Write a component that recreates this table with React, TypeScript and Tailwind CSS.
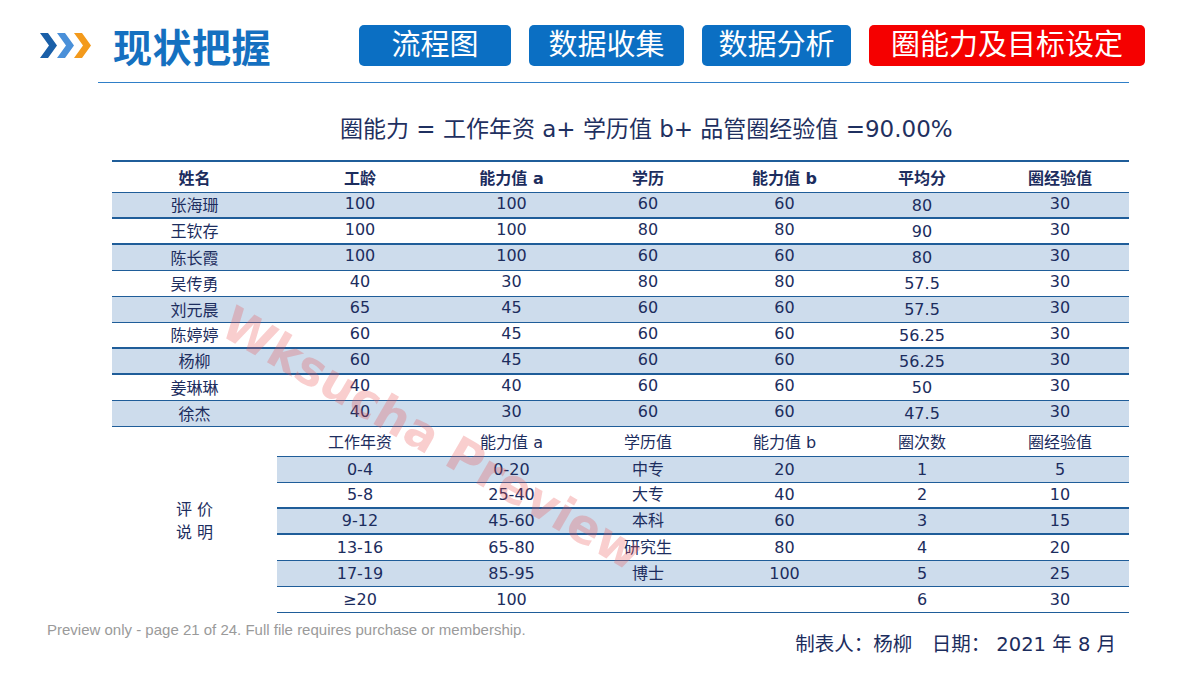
import React from "react";

const FONT = '"DejaVu Sans", "Noto Sans CJK SC", sans-serif';
const COLS = [165, 166, 137, 136, 137, 138, 138];

type Row = { cells: string[]; shade: boolean; bw: number };

const mainRows: Row[] = [
  { cells: ["张海珊", "100", "100", "60", "60", "80", "30"], shade: true, bw: 2 },
  { cells: ["王钦存", "100", "100", "80", "80", "90", "30"], shade: false, bw: 2 },
  { cells: ["陈长霞", "100", "100", "60", "60", "80", "30"], shade: true, bw: 1 },
  { cells: ["吴传勇", "40", "30", "80", "80", "57.5", "30"], shade: false, bw: 1 },
  { cells: ["刘元晨", "65", "45", "60", "60", "57.5", "30"], shade: true, bw: 1 },
  { cells: ["陈婷婷", "60", "45", "60", "60", "56.25", "30"], shade: false, bw: 2 },
  { cells: ["杨柳", "60", "45", "60", "60", "56.25", "30"], shade: true, bw: 2 },
  { cells: ["姜琳琳", "40", "40", "60", "60", "50", "30"], shade: false, bw: 1 },
  { cells: ["徐杰", "40", "30", "60", "60", "47.5", "30"], shade: true, bw: 1 },
];

const evalRows: Row[] = [
  { cells: ["0-4", "0-20", "中专", "20", "1", "5"], shade: true, bw: 1 },
  { cells: ["5-8", "25-40", "大专", "40", "2", "10"], shade: false, bw: 2 },
  { cells: ["9-12", "45-60", "本科", "60", "3", "15"], shade: true, bw: 2 },
  { cells: ["13-16", "65-80", "研究生", "80", "4", "20"], shade: false, bw: 1 },
  { cells: ["17-19", "85-95", "博士", "100", "5", "25"], shade: true, bw: 1 },
  { cells: ["≥20", "100", "", "", "6", "30"], shade: false, bw: 1 },
];

function Chevrons() {
  const pts = (x: number) =>
    `${x},0 ${x + 8},0 ${x + 17},12.5 ${x + 8},25 ${x},25 ${x + 9},12.5`;
  return (
    <svg width="54" height="25" viewBox="0 0 54 25">
      <polygon points={pts(0)} fill="#1a5fa8" />
      <polygon points={pts(17)} fill="#4a90d9" />
      <polygon points={pts(34)} fill="#f39a1c" />
    </svg>
  );
}

function Btn({ label, w, red }: { label: string; w: number; red?: boolean }) {
  return (
    <div
      className={`h-[41px] rounded-[5px] flex items-center justify-center text-white text-[29px] leading-none ${
        red ? "bg-[#f50000]" : "bg-[#0b6fc3]"
      }`}
      style={{ width: w }}
    >
      {label}
    </div>
  );
}

function DataRow({
  row,
  cols,
  bold,
  h = 26,
  pads,
}: {
  row: Row;
  cols: number[];
  bold?: boolean;
  h?: number;
  pads?: string[];
}) {
  return (
    <div
      className={`flex border-[#1f5d99] ${row.shade ? "bg-[#cddcec]" : "bg-white"}`}
      style={{ height: h, borderBottomWidth: row.bw, borderBottomStyle: "solid" }}
    >
      {row.cells.map((c, i) => (
        <div
          key={i}
          className={`flex items-center justify-center text-[16px] leading-none ${bold ? "font-bold" : ""} ${
            pads ? pads[i] : ""
          }`}
          style={{ width: cols[i] }}
        >
          {c}
        </div>
      ))}
    </div>
  );
}

const MAIN_PADS = ["pt-[2px]", "pb-[3px]", "pb-[3px]", "pb-[3px]", "pb-[3px]", "pt-[1px]", "pb-[3px]"];
const HEAD_PADS = ["pt-[3px]", "pt-[3px]", "pt-[3px]", "pt-[3px]", "pt-[3px]", "pt-[3px]", "pt-[3px]"];

export default function App() {
  return (
    <div
      className="relative w-[1200px] h-[676px] bg-white overflow-hidden text-[#1c2d5e]"
      style={{ fontFamily: FONT }}
    >
      {/* header */}
      <div className="flex items-center h-[41px] mt-[25px] pl-[40px]">
        <Chevrons />
        <div
          className="ml-[19px] text-[39px] font-bold text-[#1570c0] leading-none tracking-[0.5px]"
          style={{ fontFamily: '"Noto Sans CJK SC", sans-serif' }}
        >
          现状把握
        </div>
        <div className="flex gap-[18px] ml-[88px]">
          <Btn label="流程图" w={152} />
          <Btn label="数据收集" w={155} />
          <Btn label="数据分析" w={149} />
          <Btn label="圈能力及目标设定" w={276} red />
        </div>
      </div>
      <div className="ml-[98px] mt-[16px] w-[1031px] h-px bg-[#2f7fc8]" />

      {/* formula */}
      <div className="pl-[340px] pt-[32px] h-[60px] text-[23px] leading-[28px] text-[#1f3060] whitespace-nowrap">
        圈能力 = 工作年资 a+ 学历值 b+ 品管圈经验值 =90.00%
      </div>

      {/* table */}
      <div className="ml-[112px] mt-[17px] w-[1017px] border-t-2 border-[#1f5d99]">
        <DataRow
          row={{ cells: ["姓名", "工龄", "能力值 a", "学历", "能力值 b", "平均分", "圈经验值"], shade: false, bw: 1 }}
          cols={COLS}
          bold
          h={31}
          pads={HEAD_PADS}
        />
        {mainRows.map((r, i) => (
          <DataRow key={i} row={r} cols={COLS} pads={MAIN_PADS} />
        ))}
        <div className="flex">
          <div className="w-[165px] flex items-center justify-center text-[16px] leading-[23px] text-center pt-[2px]">
            评 价<br />说 明
          </div>
          <div className="flex-1">
            <DataRow
              row={{ cells: ["工作年资", "能力值 a", "学历值", "能力值 b", "圈次数", "圈经验值"], shade: false, bw: 1 }}
              cols={COLS.slice(1)}
              h={30}
              pads={HEAD_PADS.slice(1)}
            />
            {evalRows.map((r, i) => (
              <DataRow key={i} row={r} cols={COLS.slice(1)} />
            ))}
          </div>
        </div>
      </div>

      {/* footer */}
      <div className="flex justify-between items-start pl-[47px] pr-[84px] mt-[8px]">
        <div
          className="text-[15px] text-[#9a9a9a] leading-[16px] pt-[1px]"
          style={{ fontFamily: '"Liberation Sans", Arial, sans-serif' }}
        >
          Preview only - page 21 of 24. Full file requires purchase or membership.
        </div>
        <div className="text-[19.5px] leading-[24px] mt-[12px] text-[#1c2d5e] whitespace-nowrap">
          制表人：杨柳　日期： 2021 年 8 月
        </div>
      </div>

      {/* watermark */}
      <div className="absolute left-[432px] top-[438px] -translate-x-1/2 -translate-y-1/2 rotate-[30deg] text-[48px] font-bold text-[rgba(235,80,80,0.28)] whitespace-nowrap pointer-events-none">
        Wksucha Preview
      </div>
    </div>
  );
}
